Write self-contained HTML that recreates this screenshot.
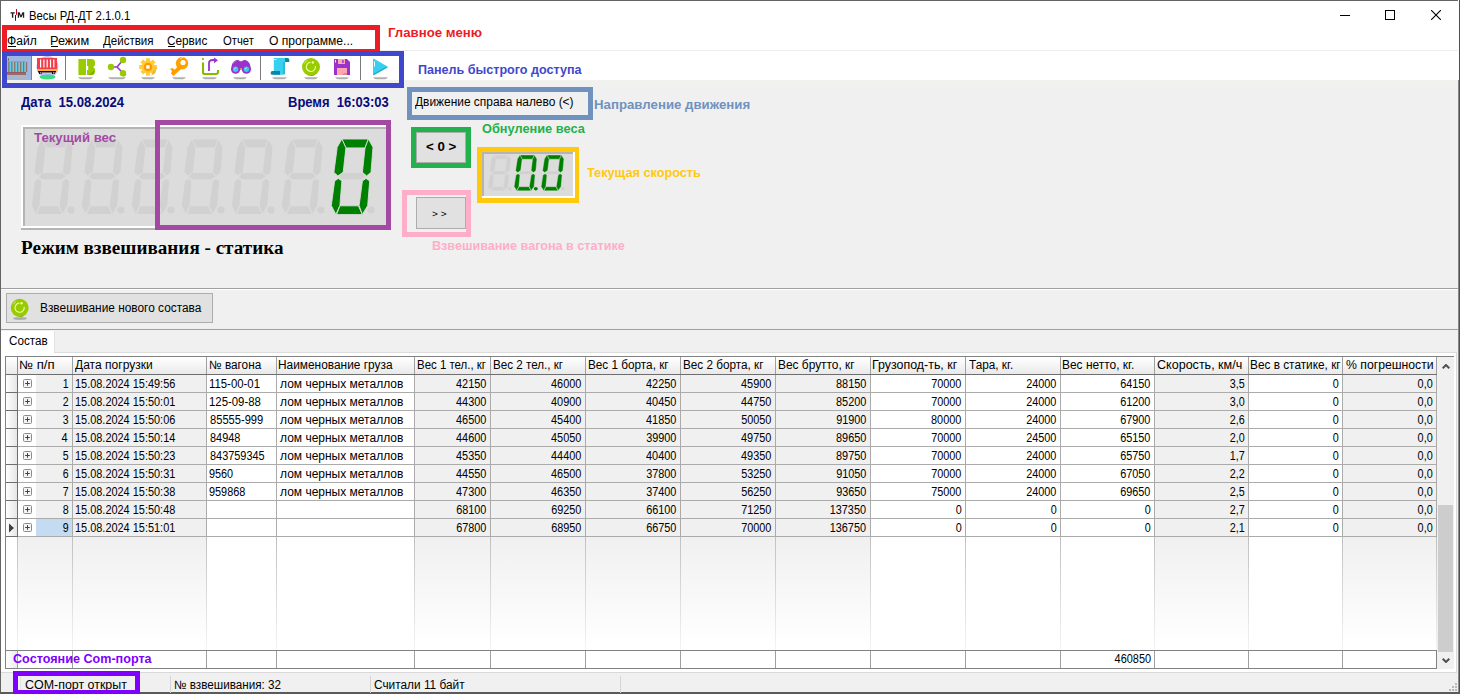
<!DOCTYPE html>
<html><head><meta charset="utf-8"><style>
html,body{margin:0;padding:0;}
body{width:1460px;height:694px;position:relative;overflow:hidden;background:#f0f0f0;font-family:"Liberation Sans",sans-serif;}
body>div,body>svg{position:absolute;}
.t{white-space:nowrap;}
</style></head><body>
<div style="left:0px;top:0px;width:1460px;height:81px;background:#fff;"></div>
<div style="left:0px;top:0px;width:1460px;height:1px;background:#646464;"></div>
<div style="left:0px;top:0px;width:1px;height:694px;background:#646464;"></div>
<div style="left:1459px;top:0px;width:1px;height:694px;background:#505050;"></div>
<div style="left:1458px;top:0px;width:1px;height:694px;background:#ffffff;"></div>
<svg style="left:9px;top:8px" width="17" height="14" viewBox="0 0 17 14"><path d="M1.5 4.2h4.2v1.3h-1.4v4.3h-1.4v-4.3h-1.4z" fill="#1e1e1e"/><rect x="7" y="1" width="1" height="5.8" fill="#c8001e"/><rect x="6" y="7" width="1" height="5.8" fill="#1e1e1e"/><path d="M8.8 4.2h1.8l1.4 3.2l1.4-3.2h1.8v5.6h-1.3v-3.6l-1.3 3h-1.2l-1.3-3v3.6h-1.3z" fill="#1e1e1e"/></svg>
<div class="t" style="left:29.26px;transform-origin:0 0;top:9.54px;font:normal 12px/12px 'Liberation Sans', sans-serif;color:#000;transform:scaleX(0.9415);">Весы РД-ДТ 2.1.0.1</div>
<div style="left:1340px;top:15px;width:10px;height:1px;background:#000;"></div>
<div style="left:1385px;top:10px;width:8px;height:8px;border:1px solid #000;background:transparent;"></div>
<svg style="left:1431px;top:10px" width="10" height="10" viewBox="0 0 10 10"><path d="M0 0L10 10M10 0L0 10" stroke="#000" stroke-width="1.1"/></svg>
<div style="left:1px;top:50px;width:1457px;height:1px;background:#ececec;"></div>
<div class="t" style="left:7.19px;transform-origin:0 0;top:34.84px;font:normal 12px/12px 'Liberation Sans', sans-serif;color:#000;transform:scaleX(1.0071);">Файл</div>
<div class="t" style="left:50.14px;transform-origin:0 0;top:34.84px;font:normal 12px/12px 'Liberation Sans', sans-serif;color:#000;transform:scaleX(1.0571);">Режим</div>
<div class="t" style="left:103.30px;transform-origin:0 0;top:34.84px;font:normal 12px/12px 'Liberation Sans', sans-serif;color:#000;transform:scaleX(0.9615);">Действия</div>
<div class="t" style="left:167.22px;transform-origin:0 0;top:34.84px;font:normal 12px/12px 'Liberation Sans', sans-serif;color:#000;transform:scaleX(0.9800);">Сервис</div>
<div class="t" style="left:222.50px;transform-origin:0 0;top:34.84px;font:normal 12px/12px 'Liberation Sans', sans-serif;color:#000;transform:scaleX(0.9394);">Отчет</div>
<div class="t" style="left:268.50px;transform-origin:0 0;top:34.84px;font:normal 12px/12px 'Liberation Sans', sans-serif;color:#000;transform:scaleX(1.0085);">О программе...</div>
<div style="left:1px;top:80px;width:1457px;height:1px;background:#f2f2ec;"></div>
<div style="left:1px;top:81px;width:1457px;height:207px;background:#f0f0f0;"></div>
<div style="left:1px;top:288px;width:1457px;height:1px;background:#a0a0a0;"></div>
<div style="left:1px;top:289px;width:1457px;height:1px;background:#ffffff;"></div>
<div style="left:1px;top:290px;width:1457px;height:39px;background:#f0f0f0;"></div>
<div style="left:1px;top:329px;width:1457px;height:1px;background:#a0a0a0;"></div>
<div style="left:1px;top:330px;width:1457px;height:343px;background:#f0f0f0;"></div>
<div style="left:1458px;top:80px;width:1px;height:614px;background:#8a8a8a;"></div>
<div class="t" style="left:20.80px;transform-origin:0 0;top:95.15px;font:bold 14px/14px 'Liberation Sans', sans-serif;color:#0b0b7c;transform:scaleX(0.9345);">Дата&nbsp;&nbsp;15.08.2024</div>
<div class="t" style="left:288.27px;transform-origin:0 0;top:95.15px;font:bold 14px/14px 'Liberation Sans', sans-serif;color:#0b0b7c;transform:scaleX(0.9280);">Время&nbsp;&nbsp;16:03:03</div>
<div style="left:21px;top:125px;width:369px;height:105px;background:#b4b4b4;"></div>
<div style="left:21px;top:125px;width:367px;height:103px;background:#ffffff;"></div>
<div style="left:23px;top:127px;width:365px;height:101px;background:#ffffff;"></div>
<div style="left:23px;top:127px;width:363px;height:99px;background:#b4b4b4;"></div>
<div style="left:25px;top:129px;width:361px;height:97px;background:#dcdcdc;"></div>
<svg style="left:31px;top:139px" width="48.0" height="78.0" viewBox="0 0 48 78" preserveAspectRatio="none"><polygon points="10.9,0 37.4,0 34,8.9 14.9,8.9" fill="#d1d1d1" stroke="#dcdcdc" stroke-width="0.9"/><polygon points="10.9,0 14.9,8.9 12.2,33.4 6.9,36.9 2.9,33.4 6.2,8.2" fill="#d1d1d1" stroke="#dcdcdc" stroke-width="0.9"/><polygon points="37.4,0 42,8.2 40,33.4 35.6,36.9 31.4,33.4 34,8.9" fill="#d1d1d1" stroke="#dcdcdc" stroke-width="0.9"/><polygon points="7.6,37.2 11.6,33.6 31.2,33.6 35.2,37.2 30.8,40.8 10.8,40.8" fill="#d1d1d1" stroke="#dcdcdc" stroke-width="0.9"/><polygon points="7.4,39.4 10.9,42 8.9,66.6 4.9,75.4 0.3,66.6 3.6,42" fill="#d1d1d1" stroke="#dcdcdc" stroke-width="0.9"/><polygon points="8.9,66.8 27.4,66.8 31.4,75.6 5.6,75.6" fill="#d1d1d1" stroke="#dcdcdc" stroke-width="0.9"/><polygon points="35,39.4 38.7,42 36.7,66.6 31.4,75.4 28.1,66.6 31.4,42" fill="#d1d1d1" stroke="#dcdcdc" stroke-width="0.9"/><circle cx="40" cy="71" r="3.6" fill="#d1d1d1"/></svg>
<svg style="left:81px;top:139px" width="48.0" height="78.0" viewBox="0 0 48 78" preserveAspectRatio="none"><polygon points="10.9,0 37.4,0 34,8.9 14.9,8.9" fill="#d1d1d1" stroke="#dcdcdc" stroke-width="0.9"/><polygon points="10.9,0 14.9,8.9 12.2,33.4 6.9,36.9 2.9,33.4 6.2,8.2" fill="#d1d1d1" stroke="#dcdcdc" stroke-width="0.9"/><polygon points="37.4,0 42,8.2 40,33.4 35.6,36.9 31.4,33.4 34,8.9" fill="#d1d1d1" stroke="#dcdcdc" stroke-width="0.9"/><polygon points="7.6,37.2 11.6,33.6 31.2,33.6 35.2,37.2 30.8,40.8 10.8,40.8" fill="#d1d1d1" stroke="#dcdcdc" stroke-width="0.9"/><polygon points="7.4,39.4 10.9,42 8.9,66.6 4.9,75.4 0.3,66.6 3.6,42" fill="#d1d1d1" stroke="#dcdcdc" stroke-width="0.9"/><polygon points="8.9,66.8 27.4,66.8 31.4,75.6 5.6,75.6" fill="#d1d1d1" stroke="#dcdcdc" stroke-width="0.9"/><polygon points="35,39.4 38.7,42 36.7,66.6 31.4,75.4 28.1,66.6 31.4,42" fill="#d1d1d1" stroke="#dcdcdc" stroke-width="0.9"/><circle cx="40" cy="71" r="3.6" fill="#d1d1d1"/></svg>
<svg style="left:131px;top:139px" width="48.0" height="78.0" viewBox="0 0 48 78" preserveAspectRatio="none"><polygon points="10.9,0 37.4,0 34,8.9 14.9,8.9" fill="#d1d1d1" stroke="#dcdcdc" stroke-width="0.9"/><polygon points="10.9,0 14.9,8.9 12.2,33.4 6.9,36.9 2.9,33.4 6.2,8.2" fill="#d1d1d1" stroke="#dcdcdc" stroke-width="0.9"/><polygon points="37.4,0 42,8.2 40,33.4 35.6,36.9 31.4,33.4 34,8.9" fill="#d1d1d1" stroke="#dcdcdc" stroke-width="0.9"/><polygon points="7.6,37.2 11.6,33.6 31.2,33.6 35.2,37.2 30.8,40.8 10.8,40.8" fill="#d1d1d1" stroke="#dcdcdc" stroke-width="0.9"/><polygon points="7.4,39.4 10.9,42 8.9,66.6 4.9,75.4 0.3,66.6 3.6,42" fill="#d1d1d1" stroke="#dcdcdc" stroke-width="0.9"/><polygon points="8.9,66.8 27.4,66.8 31.4,75.6 5.6,75.6" fill="#d1d1d1" stroke="#dcdcdc" stroke-width="0.9"/><polygon points="35,39.4 38.7,42 36.7,66.6 31.4,75.4 28.1,66.6 31.4,42" fill="#d1d1d1" stroke="#dcdcdc" stroke-width="0.9"/><circle cx="40" cy="71" r="3.6" fill="#d1d1d1"/></svg>
<svg style="left:181px;top:139px" width="48.0" height="78.0" viewBox="0 0 48 78" preserveAspectRatio="none"><polygon points="10.9,0 37.4,0 34,8.9 14.9,8.9" fill="#d1d1d1" stroke="#dcdcdc" stroke-width="0.9"/><polygon points="10.9,0 14.9,8.9 12.2,33.4 6.9,36.9 2.9,33.4 6.2,8.2" fill="#d1d1d1" stroke="#dcdcdc" stroke-width="0.9"/><polygon points="37.4,0 42,8.2 40,33.4 35.6,36.9 31.4,33.4 34,8.9" fill="#d1d1d1" stroke="#dcdcdc" stroke-width="0.9"/><polygon points="7.6,37.2 11.6,33.6 31.2,33.6 35.2,37.2 30.8,40.8 10.8,40.8" fill="#d1d1d1" stroke="#dcdcdc" stroke-width="0.9"/><polygon points="7.4,39.4 10.9,42 8.9,66.6 4.9,75.4 0.3,66.6 3.6,42" fill="#d1d1d1" stroke="#dcdcdc" stroke-width="0.9"/><polygon points="8.9,66.8 27.4,66.8 31.4,75.6 5.6,75.6" fill="#d1d1d1" stroke="#dcdcdc" stroke-width="0.9"/><polygon points="35,39.4 38.7,42 36.7,66.6 31.4,75.4 28.1,66.6 31.4,42" fill="#d1d1d1" stroke="#dcdcdc" stroke-width="0.9"/><circle cx="40" cy="71" r="3.6" fill="#d1d1d1"/></svg>
<svg style="left:231px;top:139px" width="48.0" height="78.0" viewBox="0 0 48 78" preserveAspectRatio="none"><polygon points="10.9,0 37.4,0 34,8.9 14.9,8.9" fill="#d1d1d1" stroke="#dcdcdc" stroke-width="0.9"/><polygon points="10.9,0 14.9,8.9 12.2,33.4 6.9,36.9 2.9,33.4 6.2,8.2" fill="#d1d1d1" stroke="#dcdcdc" stroke-width="0.9"/><polygon points="37.4,0 42,8.2 40,33.4 35.6,36.9 31.4,33.4 34,8.9" fill="#d1d1d1" stroke="#dcdcdc" stroke-width="0.9"/><polygon points="7.6,37.2 11.6,33.6 31.2,33.6 35.2,37.2 30.8,40.8 10.8,40.8" fill="#d1d1d1" stroke="#dcdcdc" stroke-width="0.9"/><polygon points="7.4,39.4 10.9,42 8.9,66.6 4.9,75.4 0.3,66.6 3.6,42" fill="#d1d1d1" stroke="#dcdcdc" stroke-width="0.9"/><polygon points="8.9,66.8 27.4,66.8 31.4,75.6 5.6,75.6" fill="#d1d1d1" stroke="#dcdcdc" stroke-width="0.9"/><polygon points="35,39.4 38.7,42 36.7,66.6 31.4,75.4 28.1,66.6 31.4,42" fill="#d1d1d1" stroke="#dcdcdc" stroke-width="0.9"/><circle cx="40" cy="71" r="3.6" fill="#d1d1d1"/></svg>
<svg style="left:281px;top:139px" width="48.0" height="78.0" viewBox="0 0 48 78" preserveAspectRatio="none"><polygon points="10.9,0 37.4,0 34,8.9 14.9,8.9" fill="#d1d1d1" stroke="#dcdcdc" stroke-width="0.9"/><polygon points="10.9,0 14.9,8.9 12.2,33.4 6.9,36.9 2.9,33.4 6.2,8.2" fill="#d1d1d1" stroke="#dcdcdc" stroke-width="0.9"/><polygon points="37.4,0 42,8.2 40,33.4 35.6,36.9 31.4,33.4 34,8.9" fill="#d1d1d1" stroke="#dcdcdc" stroke-width="0.9"/><polygon points="7.6,37.2 11.6,33.6 31.2,33.6 35.2,37.2 30.8,40.8 10.8,40.8" fill="#d1d1d1" stroke="#dcdcdc" stroke-width="0.9"/><polygon points="7.4,39.4 10.9,42 8.9,66.6 4.9,75.4 0.3,66.6 3.6,42" fill="#d1d1d1" stroke="#dcdcdc" stroke-width="0.9"/><polygon points="8.9,66.8 27.4,66.8 31.4,75.6 5.6,75.6" fill="#d1d1d1" stroke="#dcdcdc" stroke-width="0.9"/><polygon points="35,39.4 38.7,42 36.7,66.6 31.4,75.4 28.1,66.6 31.4,42" fill="#d1d1d1" stroke="#dcdcdc" stroke-width="0.9"/><circle cx="40" cy="71" r="3.6" fill="#d1d1d1"/></svg>
<svg style="left:331px;top:139px" width="48.0" height="78.0" viewBox="0 0 48 78" preserveAspectRatio="none"><polygon points="10.9,0 37.4,0 34,8.9 14.9,8.9" fill="#008000" stroke="#dcdcdc" stroke-width="0.9"/><polygon points="10.9,0 14.9,8.9 12.2,33.4 6.9,36.9 2.9,33.4 6.2,8.2" fill="#008000" stroke="#dcdcdc" stroke-width="0.9"/><polygon points="37.4,0 42,8.2 40,33.4 35.6,36.9 31.4,33.4 34,8.9" fill="#008000" stroke="#dcdcdc" stroke-width="0.9"/><polygon points="7.6,37.2 11.6,33.6 31.2,33.6 35.2,37.2 30.8,40.8 10.8,40.8" fill="#d1d1d1" stroke="#dcdcdc" stroke-width="0.9"/><polygon points="7.4,39.4 10.9,42 8.9,66.6 4.9,75.4 0.3,66.6 3.6,42" fill="#008000" stroke="#dcdcdc" stroke-width="0.9"/><polygon points="8.9,66.8 27.4,66.8 31.4,75.6 5.6,75.6" fill="#008000" stroke="#dcdcdc" stroke-width="0.9"/><polygon points="35,39.4 38.7,42 36.7,66.6 31.4,75.4 28.1,66.6 31.4,42" fill="#008000" stroke="#dcdcdc" stroke-width="0.9"/><circle cx="40" cy="71" r="3.6" fill="#d1d1d1"/></svg>
<div style="left:155px;top:120px;width:226px;height:100px;border:5px solid #a349a4;background:transparent;"></div>
<div class="t" style="left:34.00px;transform-origin:0 0;top:131.64px;font:bold 12px/12px 'Liberation Sans', sans-serif;color:#a349a4;transform:scaleX(1.0986);">Текущий вес</div>
<div class="t" style="left:20.90px;transform-origin:0 0;top:238.73px;font:bold 18px/18px 'Liberation Serif', serif;color:#000;transform:scaleX(1.0615);">Режим взвешивания - статика</div>
<div style="left:407px;top:87px;width:176px;height:23px;border:5px solid #7092be;background:#f0f0f0;"></div>
<div class="t" style="left:415.00px;transform-origin:0 0;top:96.14px;font:normal 12px/12px 'Liberation Sans', sans-serif;color:#000;transform:scaleX(0.9937);">Движение справа налево (&lt;)</div>
<div class="t" style="left:593.60px;transform-origin:0 0;top:99.14px;font:bold 12px/12px 'Liberation Sans', sans-serif;color:#7092be;transform:scaleX(1.1029);">Направление движения</div>
<div style="left:411px;top:127px;width:50px;height:31px;border:5px solid #22b14c;background:transparent;"></div>
<div style="left:416px;top:132px;width:48px;height:29px;border:1px solid #adadad;background:#e1e1e1;"></div>
<div class="t" style="left:425.60px;transform-origin:0 0;top:140.00px;font:bold 13px/13px 'Liberation Sans', sans-serif;color:#000;transform:scaleX(1.0241);">&lt; 0 &gt;</div>
<div class="t" style="left:481.50px;transform-origin:0 0;top:122.94px;font:bold 12px/12px 'Liberation Sans', sans-serif;color:#22b14c;transform:scaleX(1.0649);">Обнуление веса</div>
<div style="left:477px;top:147px;width:92px;height:46px;border:5px solid #ffc90e;background:transparent;"></div>
<div style="left:482px;top:152px;width:93px;height:46px;background:#ffffff;"></div>
<div style="left:482px;top:152px;width:91px;height:44px;background:#b4b4b4;"></div>
<div style="left:484px;top:154px;width:89px;height:42px;background:#dcdcdc;"></div>
<svg style="left:487.5px;top:155px" width="26.2" height="37.0" viewBox="0 0 48 78" preserveAspectRatio="none"><polygon points="10.9,0 37.4,0 34,8.9 14.9,8.9" fill="#d1d1d1" stroke="#dcdcdc" stroke-width="0.8"/><polygon points="10.9,0 14.9,8.9 12.2,33.4 6.9,36.9 2.9,33.4 6.2,8.2" fill="#d1d1d1" stroke="#dcdcdc" stroke-width="0.8"/><polygon points="37.4,0 42,8.2 40,33.4 35.6,36.9 31.4,33.4 34,8.9" fill="#d1d1d1" stroke="#dcdcdc" stroke-width="0.8"/><polygon points="7.6,37.2 11.6,33.6 31.2,33.6 35.2,37.2 30.8,40.8 10.8,40.8" fill="#d1d1d1" stroke="#dcdcdc" stroke-width="0.8"/><polygon points="7.4,39.4 10.9,42 8.9,66.6 4.9,75.4 0.3,66.6 3.6,42" fill="#d1d1d1" stroke="#dcdcdc" stroke-width="0.8"/><polygon points="8.9,66.8 27.4,66.8 31.4,75.6 5.6,75.6" fill="#d1d1d1" stroke="#dcdcdc" stroke-width="0.8"/><polygon points="35,39.4 38.7,42 36.7,66.6 31.4,75.4 28.1,66.6 31.4,42" fill="#d1d1d1" stroke="#dcdcdc" stroke-width="0.8"/><circle cx="40" cy="71" r="3.6" fill="#d1d1d1"/></svg>
<svg style="left:514px;top:155px" width="26.2" height="37.0" viewBox="0 0 48 78" preserveAspectRatio="none"><polygon points="10.9,0 37.4,0 34,8.9 14.9,8.9" fill="#008000" stroke="#dcdcdc" stroke-width="0.8"/><polygon points="10.9,0 14.9,8.9 12.2,33.4 6.9,36.9 2.9,33.4 6.2,8.2" fill="#008000" stroke="#dcdcdc" stroke-width="0.8"/><polygon points="37.4,0 42,8.2 40,33.4 35.6,36.9 31.4,33.4 34,8.9" fill="#008000" stroke="#dcdcdc" stroke-width="0.8"/><polygon points="7.6,37.2 11.6,33.6 31.2,33.6 35.2,37.2 30.8,40.8 10.8,40.8" fill="#d1d1d1" stroke="#dcdcdc" stroke-width="0.8"/><polygon points="7.4,39.4 10.9,42 8.9,66.6 4.9,75.4 0.3,66.6 3.6,42" fill="#008000" stroke="#dcdcdc" stroke-width="0.8"/><polygon points="8.9,66.8 27.4,66.8 31.4,75.6 5.6,75.6" fill="#008000" stroke="#dcdcdc" stroke-width="0.8"/><polygon points="35,39.4 38.7,42 36.7,66.6 31.4,75.4 28.1,66.6 31.4,42" fill="#008000" stroke="#dcdcdc" stroke-width="0.8"/><circle cx="40" cy="71" r="3.6" fill="#008000"/></svg>
<svg style="left:541px;top:155px" width="26.2" height="37.0" viewBox="0 0 48 78" preserveAspectRatio="none"><polygon points="10.9,0 37.4,0 34,8.9 14.9,8.9" fill="#008000" stroke="#dcdcdc" stroke-width="0.8"/><polygon points="10.9,0 14.9,8.9 12.2,33.4 6.9,36.9 2.9,33.4 6.2,8.2" fill="#008000" stroke="#dcdcdc" stroke-width="0.8"/><polygon points="37.4,0 42,8.2 40,33.4 35.6,36.9 31.4,33.4 34,8.9" fill="#008000" stroke="#dcdcdc" stroke-width="0.8"/><polygon points="7.6,37.2 11.6,33.6 31.2,33.6 35.2,37.2 30.8,40.8 10.8,40.8" fill="#d1d1d1" stroke="#dcdcdc" stroke-width="0.8"/><polygon points="7.4,39.4 10.9,42 8.9,66.6 4.9,75.4 0.3,66.6 3.6,42" fill="#008000" stroke="#dcdcdc" stroke-width="0.8"/><polygon points="8.9,66.8 27.4,66.8 31.4,75.6 5.6,75.6" fill="#008000" stroke="#dcdcdc" stroke-width="0.8"/><polygon points="35,39.4 38.7,42 36.7,66.6 31.4,75.4 28.1,66.6 31.4,42" fill="#008000" stroke="#dcdcdc" stroke-width="0.8"/><circle cx="40" cy="71" r="3.6" fill="#d1d1d1"/></svg>
<div class="t" style="left:587.20px;transform-origin:0 0;top:166.84px;font:bold 12px/12px 'Liberation Sans', sans-serif;color:#ffc90e;transform:scaleX(1.0579);">Текущая скорость</div>
<div style="left:402px;top:190px;width:59px;height:37px;border:5px solid #ffaec9;background:transparent;"></div>
<div style="left:416px;top:197px;width:48px;height:30px;border:1px solid #adadad;background:#e1e1e1;"></div>
<div class="t" style="left:431.68px;transform-origin:0 0;top:209.88px;font:normal 9px/9px 'Liberation Sans', sans-serif;color:#000;transform:scaleX(1.1250);">&gt; &gt;</div>
<div class="t" style="left:431.95px;transform-origin:0 0;top:240.14px;font:bold 12px/12px 'Liberation Sans', sans-serif;color:#ffaec9;transform:scaleX(1.0495);">Взвешивание вагона в статике</div>
<div style="left:6px;top:293px;width:205px;height:28px;border:1px solid #adadad;background:#e1e1e1;"></div>
<svg style="left:10px;top:298px" width="20" height="22" viewBox="0 0 20 22"><ellipse cx="10" cy="20.5" rx="7" ry="1.3" fill="#a8a8a8"/><circle cx="9.7" cy="9.8" r="9" fill="#99cc00"/><path d="M15 16 a9 9 0 0 1 -9 2.5 L12 19z" fill="#7aab00"/><path d="M14.1 8.8 A4.6 4.6 0 1 1 9.2 5.1" stroke="#f0ffa8" stroke-width="1.1" fill="none"/><circle cx="11.5" cy="5.3" r="1.2" fill="#f0ffa8"/><path d="M3.2 6.3 L6 3.2" stroke="#e8f8a0" stroke-width="0.7"/></svg>
<div class="t" style="left:40.31px;transform-origin:0 0;top:301.64px;font:normal 12px/12px 'Liberation Sans', sans-serif;color:#000;transform:scaleX(0.9895);">Взвешивание нового состава</div>
<div style="left:7px;top:56px;width:25px;height:24px;background:#9fb6e1;"></div>
<div style="left:31px;top:56px;width:1px;height:24px;background:#5a86d4;"></div>
<svg style="left:7px;top:57px" width="22" height="22" viewBox="0 0 22 22"><rect x="0" y="4" width="18.5" height="11" fill="#6ccbe8"/><rect x="0" y="4" width="18.5" height="1" fill="#58b8d8"/><rect x="1.20" y="5" width="1.3" height="10" fill="#8c7464"/><rect x="4.15" y="5" width="1.3" height="10" fill="#8c7464"/><rect x="7.10" y="5" width="1.3" height="10" fill="#8c7464"/><rect x="10.05" y="5" width="1.3" height="10" fill="#8c7464"/><rect x="13.00" y="5" width="1.3" height="10" fill="#8c7464"/><rect x="15.95" y="5" width="1.3" height="10" fill="#8c7464"/><rect x="18.90" y="5" width="1.3" height="10" fill="#8c7464"/><rect x="0" y="15" width="19" height="0.8" fill="#7a4a48"/><rect x="0" y="15.8" width="19" height="1.6" fill="#dc4c50"/><rect x="0" y="17.4" width="19" height="0.6" fill="#7a5a58"/><rect x="0.2" y="18" width="2.6" height="2.2" fill="#cdb28a"/><rect x="4" y="18" width="2.6" height="2.2" fill="#cdb28a"/><rect x="11" y="18" width="2.6" height="2.2" fill="#cdb28a"/><rect x="15" y="18" width="2.6" height="2.2" fill="#cdb28a"/><rect x="1" y="1.5" width="1" height="2" fill="#6b6b1b"/></svg>
<svg style="left:35px;top:55px" width="26" height="26" viewBox="0 0 26 26"><circle cx="12.5" cy="12" r="11" fill="#c6b9fb"/><ellipse cx="12.5" cy="22" rx="8" ry="2.6" fill="#3ddc84"/><rect x="2" y="3" width="20" height="11" fill="#f43d4b"/><rect x="5.0" y="4.5" width="1.2" height="8" fill="#ffffff"/><rect x="8.3" y="4.5" width="1.2" height="8" fill="#ffffff"/><rect x="11.6" y="4.5" width="1.2" height="8" fill="#ffffff"/><rect x="14.899999999999999" y="4.5" width="1.2" height="8" fill="#ffffff"/><rect x="18.2" y="4.5" width="1.2" height="8" fill="#ffffff"/><rect x="2" y="14" width="20" height="2" fill="#ffb52e"/><rect x="3" y="16" width="18" height="1.4" fill="#111"/><rect x="4" y="17" width="3" height="2" fill="#111"/><rect x="17" y="17" width="3" height="2" fill="#111"/><rect x="5" y="17.4" width="1.5" height="1" fill="#eee"/><rect x="18" y="17.4" width="1.5" height="1" fill="#eee"/></svg>
<div style="left:65px;top:56px;width:1px;height:24px;background:#7a7a7a;"></div>
<svg style="left:78px;top:59px" width="18" height="17" viewBox="0 0 18 17"><rect x="0" y="0" width="8" height="16" fill="#99cc00"/><rect x="0" y="0" width="1" height="16" fill="#c3e36a"/><path d="M9 0h4.5a3.5 3.5 0 0 1 3.5 3.5v1.5a3 3 0 0 1-2 3a3 3 0 0 1 2 3v1.5a3.5 3.5 0 0 1-3.5 3.5h-4.5v-5h1.2v-4h-1.2z" fill="#99cc00"/><path d="M16.2 11.5a3.5 3.5 0 0 1-3 4.5h-2.5z" fill="#7aab00"/></svg>
<svg style="left:78px;top:77px" width="15" height="3" viewBox="0 0 15 3"><path d="M0 0.2 H15 Q13.5 2.2 12 2.2 H3 Q1.5 2.2 0 0.2z" fill="#b0b0b0"/></svg>
<svg style="left:107px;top:55px" width="20" height="22" viewBox="0 0 20 22"><path d="M4 12L10 12L16 5M10 12L16 18" stroke="#9933cc" stroke-width="1.6" fill="none"/><circle cx="16" cy="5" r="3.2" fill="#99cc00"/><circle cx="4" cy="12" r="3.2" fill="#99cc00"/><circle cx="16" cy="18.2" r="3.2" fill="#99cc00"/><path d="M19 17.5a3.2 3.2 0 0 1-3 3.9l2.5-2z" fill="#7aab00"/></svg>
<svg style="left:108px;top:77px" width="18" height="3" viewBox="0 0 18 3"><path d="M0 0.2 H18 Q16.5 2.2 15 2.2 H3 Q1.5 2.2 0 0.2z" fill="#b0b0b0"/></svg>
<svg style="left:138px;top:57px" width="20" height="20" viewBox="0 0 20 20"><path d="M16.30,8.03L18.79,8.07L18.79,11.93L16.30,11.97L15.84,13.07L17.58,14.85L14.85,17.58L13.07,15.84L11.97,16.30L11.93,18.79L8.07,18.79L8.03,16.30L6.93,15.84L5.15,17.58L2.42,14.85L4.16,13.07L3.70,11.97L1.21,11.93L1.21,8.07L3.70,8.03L4.16,6.93L2.42,5.15L5.15,2.42L6.93,4.16L8.03,3.70L8.07,1.21L11.93,1.21L11.97,3.70L13.07,4.16L14.85,2.42L17.58,5.15L15.84,6.93Z" fill="#ffcc33"/><path d="M16.5 12 L19 10.5 L17 16.5 L13 18.5z" fill="#e0b020" opacity="0.8"/><circle cx="10" cy="10" r="4.3" fill="#ff9900"/><rect x="8.2" y="8.2" width="3.4" height="3.4" fill="#fff"/></svg>
<svg style="left:141px;top:77px" width="14" height="3" viewBox="0 0 14 3"><path d="M0 0.2 H14 Q12.5 2.2 11 2.2 H3 Q1.5 2.2 0 0.2z" fill="#b0b0b0"/></svg>
<svg style="left:168px;top:55px" width="22" height="22" viewBox="0 0 22 22"><circle cx="14" cy="8.3" r="6.2" fill="#ffa200"/><circle cx="15" cy="7.5" r="2.6" fill="#fff"/><path d="M10 11.5 L13 14 L5.5 21 L3 18.5 L4 16 L2 14 L4.5 13 L6.5 14.8z" fill="#ff9c00"/><path d="M12.5 4 a5 5 0 0 1 3-2" stroke="#fff" stroke-width="0.8" fill="none"/></svg>
<svg style="left:172px;top:77px" width="14" height="3" viewBox="0 0 14 3"><path d="M0 0.2 H14 Q12.5 2.2 11 2.2 H3 Q1.5 2.2 0 0.2z" fill="#b0b0b0"/></svg>
<svg style="left:200px;top:57px" width="20" height="20" viewBox="0 0 20 20"><rect x="2" y="1" width="2" height="2" fill="#99cc22"/><path d="M3 5.5 V15.5 Q3 17 5 17 H16 Q18 17 18 15 V13" stroke="#88bb00" stroke-width="2.1" fill="none"/><path d="M9 14 V6 Q9 3 13 3 H14" stroke="#9933cc" stroke-width="1.8" fill="none"/><path d="M14 0.5 L18 3.2 L14 6.3z" fill="#9933cc"/></svg>
<svg style="left:202px;top:77px" width="15" height="3" viewBox="0 0 15 3"><path d="M0 0.2 H15 Q13.5 2.2 12 2.2 H3 Q1.5 2.2 0 0.2z" fill="#b0b0b0"/></svg>
<svg style="left:230px;top:59px" width="24" height="16" viewBox="0 0 24 16"><path d="M1.6 9.5 Q1.2 3 6 1.2 Q8.5 0.3 10 2.2 H12 Q13.5 0.3 16 1.2 Q20.8 3 20.4 9.5z" fill="#9933cc"/><circle cx="5.6" cy="10.2" r="4.6" fill="#9933cc"/><circle cx="16.4" cy="10.2" r="4.6" fill="#9933cc"/><rect x="9" y="6" width="4" height="5" fill="#9933cc"/><circle cx="5.6" cy="10.2" r="2.7" fill="#3cc8ec"/><circle cx="16.4" cy="10.2" r="2.7" fill="#3cc8ec"/><rect x="10.2" y="9.2" width="1.8" height="1.8" fill="#ffa500"/><path d="M4.3 10 l1.2 -1 M15.2 10 l1.4 -0.9" stroke="#fff" stroke-width="0.8"/><path d="M3 5 Q4 2.5 6 2" stroke="#c080e0" stroke-width="0.6" fill="none"/></svg>
<svg style="left:233px;top:77px" width="14" height="3" viewBox="0 0 14 3"><path d="M0 0.2 H14 Q12.5 2.2 11 2.2 H3 Q1.5 2.2 0 0.2z" fill="#b0b0b0"/></svg>
<div style="left:260px;top:56px;width:1px;height:24px;background:#7a7a7a;"></div>
<svg style="left:270px;top:57px" width="20" height="19" viewBox="0 0 20 19"><path d="M3.8 1 H15 V16.5 Q15 17.8 13.5 17.8 H3.8z" fill="#38d0ee"/><rect x="13" y="5" width="2" height="12" fill="#2cb8d6"/><path d="M15 1 h2.5 a1.8 1.8 0 0 1 1.8 1.8 v2.2 h-4.3z" fill="#0a86a6"/><path d="M2.5 14 h7.5 v3.8 h-7.5 a1.9 1.9 0 0 1 0 -3.8z" fill="#0a86a6"/><rect x="4" y="2" width="2.5" height="0.8" fill="#e6faff"/></svg>
<svg style="left:272px;top:77px" width="15" height="3" viewBox="0 0 15 3"><path d="M0 0.2 H15 Q13.5 2.2 12 2.2 H3 Q1.5 2.2 0 0.2z" fill="#b0b0b0"/></svg>
<svg style="left:301px;top:57px" width="20" height="20" viewBox="0 0 20 20"><circle cx="10" cy="10" r="9" fill="#99cc00"/><path d="M15 16 a9 9 0 0 1 -9 2.5 L12 19z" fill="#7aab00"/><path d="M14.4 9 A4.6 4.6 0 1 1 9.5 5.3" stroke="#f0ffa8" stroke-width="1.1" fill="none"/><circle cx="11.8" cy="5.5" r="1.2" fill="#f0ffa8"/><path d="M3.5 6.5 L6.3 3.4" stroke="#e8f8a0" stroke-width="0.7"/></svg>
<svg style="left:304px;top:77px" width="14" height="3" viewBox="0 0 14 3"><path d="M0 0.2 H14 Q12.5 2.2 11 2.2 H3 Q1.5 2.2 0 0.2z" fill="#b0b0b0"/></svg>
<svg style="left:334px;top:58px" width="17" height="18" viewBox="0 0 17 18"><path d="M0 1 H13 L16 4 V17 H0z" fill="#9933cc"/><rect x="4" y="1" width="7" height="5" fill="#ffaaaa"/><rect x="8.2" y="2" width="1.4" height="3" fill="#9933cc"/><rect x="3" y="10" width="10" height="7" fill="#ffa6ae"/><rect x="1" y="2" width="0.9" height="2.5" fill="#fff"/><path d="M8 17 L10 15 H13 V17z" fill="#dd8890"/></svg>
<svg style="left:335px;top:77px" width="14" height="3" viewBox="0 0 14 3"><path d="M0 0.2 H14 Q12.5 2.2 11 2.2 H3 Q1.5 2.2 0 0.2z" fill="#b0b0b0"/></svg>
<div style="left:360px;top:56px;width:1px;height:24px;background:#7a7a7a;"></div>
<svg style="left:372px;top:58px" width="18" height="18" viewBox="0 0 18 18"><path d="M1 1 Q1 0.5 2 0.8 L15.5 8.5 Q16.2 9 15.5 9.5 L2 17 Q1 17.5 1 16.5z" fill="#38d0ee"/><path d="M15.5 9.5 L2 17 L1 16 L13.5 9z" fill="#22b0cc"/><rect x="2" y="3.5" width="1" height="5" fill="#e8fbff"/></svg>
<svg style="left:373px;top:77px" width="15" height="3" viewBox="0 0 15 3"><path d="M0 0.2 H15 Q13.5 2.2 12 2.2 H3 Q1.5 2.2 0 0.2z" fill="#b0b0b0"/></svg>
<div style="left:2px;top:25px;width:368px;height:19px;border:5px solid #ed1c24;background:transparent;"></div>
<div style="left:2px;top:51px;width:392px;height:27px;border:5px solid #3f48cc;background:transparent;"></div>
<div style="left:8px;top:46px;width:8px;height:1px;background:#000;"></div>
<div style="left:51px;top:46px;width:7px;height:1px;background:#000;"></div>
<div style="left:168px;top:46px;width:7px;height:1px;background:#000;"></div>
<div class="t" style="left:388.20px;transform-origin:0 0;top:26.74px;font:bold 12px/12px 'Liberation Sans', sans-serif;color:#ed1c24;transform:scaleX(1.1000);">Главное меню</div>
<div class="t" style="left:417.85px;transform-origin:0 0;top:64.04px;font:bold 12px/12px 'Liberation Sans', sans-serif;color:#3f48cc;transform:scaleX(1.0471);">Панель быстрого доступа</div>
<div style="left:1px;top:330px;width:1457px;height:343px;background:#f0f0f0;"></div>
<div style="left:54px;top:331px;width:1402px;height:21px;background:#f0f0f0;"></div>
<div style="left:54px;top:331px;width:1px;height:21px;background:#e3e3e3;"></div>
<div style="left:1px;top:331px;width:53px;height:22px;background:#ffffff;"></div>
<div class="t" style="left:8.83px;transform-origin:0 0;top:334.84px;font:normal 12px/12px 'Liberation Sans', sans-serif;color:#000;transform:scaleX(0.9711);">Состав</div>
<div style="left:1px;top:352px;width:1456px;height:320px;background:#ffffff;"></div>
<div style="left:1456px;top:352px;width:1px;height:320px;background:#dadada;"></div>
<div style="left:54px;top:352px;width:1403px;height:1px;background:#dcdcdc;"></div>
<div style="left:1px;top:672px;width:1456px;height:1px;background:#dadada;"></div>
<div style="left:5px;top:356px;width:1449px;height:313px;background:#ffffff;"></div>
<div style="left:5px;top:356px;width:1449px;height:1px;background:#828282;"></div>
<div style="left:5px;top:356px;width:1px;height:313px;background:#828282;"></div>
<div style="left:6px;top:357px;width:1430px;height:17px;background:linear-gradient(#ffffff,#f7f7f7 40%,#e9e9e9);"></div>
<div style="left:6px;top:374px;width:1431px;height:1px;background:#6e6e6e;"></div>
<div style="left:17px;top:357px;width:1px;height:18px;background:#8a8a8a;"></div>
<div style="left:72px;top:357px;width:1px;height:17px;background:#a0a0a0;"></div>
<div class="t" style="left:19.41px;transform-origin:0 0;top:358.64px;font:normal 12px/12px 'Liberation Sans', sans-serif;color:#000;transform:scaleX(1.0935);">№ п/п</div>
<div style="left:206px;top:357px;width:1px;height:17px;background:#a0a0a0;"></div>
<div class="t" style="left:74.90px;transform-origin:0 0;top:358.64px;font:normal 12px/12px 'Liberation Sans', sans-serif;color:#000;transform:scaleX(1.0039);">Дата погрузки</div>
<div style="left:276px;top:357px;width:1px;height:17px;background:#a0a0a0;"></div>
<div class="t" style="left:209.02px;transform-origin:0 0;top:358.64px;font:normal 12px/12px 'Liberation Sans', sans-serif;color:#000;transform:scaleX(0.9808);">№ вагона</div>
<div style="left:414px;top:357px;width:1px;height:17px;background:#a0a0a0;"></div>
<div class="t" style="left:278.41px;transform-origin:0 0;top:358.64px;font:normal 12px/12px 'Liberation Sans', sans-serif;color:#000;transform:scaleX(0.9904);">Наименование груза</div>
<div style="left:490px;top:357px;width:1px;height:17px;background:#a0a0a0;"></div>
<div class="t" style="left:416.55px;transform-origin:0 0;top:358.64px;font:normal 12px/12px 'Liberation Sans', sans-serif;color:#000;transform:scaleX(0.9549);">Вес 1 тел., кг</div>
<div style="left:585px;top:357px;width:1px;height:17px;background:#a0a0a0;"></div>
<div class="t" style="left:492.53px;transform-origin:0 0;top:358.64px;font:normal 12px/12px 'Liberation Sans', sans-serif;color:#000;transform:scaleX(0.9690);">Вес 2 тел., кг</div>
<div style="left:680px;top:357px;width:1px;height:17px;background:#a0a0a0;"></div>
<div class="t" style="left:587.62px;transform-origin:0 0;top:358.64px;font:normal 12px/12px 'Liberation Sans', sans-serif;color:#000;transform:scaleX(0.9790);">Вес 1 борта, кг</div>
<div style="left:775px;top:357px;width:1px;height:17px;background:#a0a0a0;"></div>
<div class="t" style="left:682.62px;transform-origin:0 0;top:358.64px;font:normal 12px/12px 'Liberation Sans', sans-serif;color:#000;transform:scaleX(0.9778);">Вес 2 борта, кг</div>
<div style="left:870px;top:357px;width:1px;height:17px;background:#a0a0a0;"></div>
<div class="t" style="left:777.51px;transform-origin:0 0;top:358.64px;font:normal 12px/12px 'Liberation Sans', sans-serif;color:#000;transform:scaleX(0.9921);">Вес брутто, кг</div>
<div style="left:965px;top:357px;width:1px;height:17px;background:#a0a0a0;"></div>
<div class="t" style="left:872.37px;transform-origin:0 0;top:358.64px;font:normal 12px/12px 'Liberation Sans', sans-serif;color:#000;transform:scaleX(1.0346);">Грузопод-ть, кг</div>
<div style="left:1060px;top:357px;width:1px;height:17px;background:#a0a0a0;"></div>
<div class="t" style="left:968.80px;transform-origin:0 0;top:358.64px;font:normal 12px/12px 'Liberation Sans', sans-serif;color:#000;transform:scaleX(0.9818);">Тара, кг.</div>
<div style="left:1154px;top:357px;width:1px;height:17px;background:#a0a0a0;"></div>
<div class="t" style="left:1062.30px;transform-origin:0 0;top:358.64px;font:normal 12px/12px 'Liberation Sans', sans-serif;color:#000;transform:scaleX(0.9958);">Вес нетто, кг.</div>
<div style="left:1248px;top:357px;width:1px;height:17px;background:#a0a0a0;"></div>
<div class="t" style="left:1156.95px;transform-origin:0 0;top:358.64px;font:normal 12px/12px 'Liberation Sans', sans-serif;color:#000;transform:scaleX(1.0450);">Скорость, км/ч</div>
<div style="left:1342px;top:357px;width:1px;height:17px;background:#a0a0a0;"></div>
<div class="t" style="left:1250.22px;transform-origin:0 0;top:358.64px;font:normal 12px/12px 'Liberation Sans', sans-serif;color:#000;transform:scaleX(0.9846);">Вес в статике, кг</div>
<div style="left:1436px;top:357px;width:1px;height:17px;background:#a0a0a0;"></div>
<div class="t" style="left:1345.80px;transform-origin:0 0;top:358.64px;font:normal 12px/12px 'Liberation Sans', sans-serif;color:#000;transform:scaleX(1.0188);">% погрешности</div>
<div style="left:36px;top:375px;width:36px;height:162px;background:#f0f0f0;"></div>
<div style="left:18px;top:537px;width:54px;height:113px;background:linear-gradient(#f0f0f0,#ffffff 96%);"></div>
<div style="left:73px;top:375px;width:133px;height:162px;background:#f0f0f0;"></div>
<div style="left:73px;top:537px;width:133px;height:113px;background:linear-gradient(#f0f0f0,#ffffff 96%);"></div>
<div style="left:415px;top:375px;width:75px;height:162px;background:#f0f0f0;"></div>
<div style="left:415px;top:537px;width:75px;height:113px;background:linear-gradient(#f0f0f0,#ffffff 96%);"></div>
<div style="left:491px;top:375px;width:94px;height:162px;background:#f0f0f0;"></div>
<div style="left:491px;top:537px;width:94px;height:113px;background:linear-gradient(#f0f0f0,#ffffff 96%);"></div>
<div style="left:586px;top:375px;width:94px;height:162px;background:#f0f0f0;"></div>
<div style="left:586px;top:537px;width:94px;height:113px;background:linear-gradient(#f0f0f0,#ffffff 96%);"></div>
<div style="left:681px;top:375px;width:94px;height:162px;background:#f0f0f0;"></div>
<div style="left:681px;top:537px;width:94px;height:113px;background:linear-gradient(#f0f0f0,#ffffff 96%);"></div>
<div style="left:776px;top:375px;width:94px;height:162px;background:#f0f0f0;"></div>
<div style="left:776px;top:537px;width:94px;height:113px;background:linear-gradient(#f0f0f0,#ffffff 96%);"></div>
<div style="left:1155px;top:375px;width:93px;height:162px;background:#f0f0f0;"></div>
<div style="left:1155px;top:537px;width:93px;height:113px;background:linear-gradient(#f0f0f0,#ffffff 96%);"></div>
<div style="left:1343px;top:375px;width:93px;height:162px;background:#f0f0f0;"></div>
<div style="left:1343px;top:537px;width:93px;height:113px;background:linear-gradient(#f0f0f0,#ffffff 96%);"></div>
<div style="left:36px;top:519px;width:36px;height:17px;background:#c4dcf2;"></div>
<div style="left:6px;top:375px;width:11px;height:17px;background:linear-gradient(90deg,#ffffff,#e6e6e6);"></div>
<div style="left:6px;top:392px;width:11px;height:1px;background:#6e6e6e;"></div>
<div style="left:6px;top:393px;width:11px;height:17px;background:linear-gradient(90deg,#ffffff,#e6e6e6);"></div>
<div style="left:6px;top:410px;width:11px;height:1px;background:#6e6e6e;"></div>
<div style="left:6px;top:411px;width:11px;height:17px;background:linear-gradient(90deg,#ffffff,#e6e6e6);"></div>
<div style="left:6px;top:428px;width:11px;height:1px;background:#6e6e6e;"></div>
<div style="left:6px;top:429px;width:11px;height:17px;background:linear-gradient(90deg,#ffffff,#e6e6e6);"></div>
<div style="left:6px;top:446px;width:11px;height:1px;background:#6e6e6e;"></div>
<div style="left:6px;top:447px;width:11px;height:17px;background:linear-gradient(90deg,#ffffff,#e6e6e6);"></div>
<div style="left:6px;top:464px;width:11px;height:1px;background:#6e6e6e;"></div>
<div style="left:6px;top:465px;width:11px;height:17px;background:linear-gradient(90deg,#ffffff,#e6e6e6);"></div>
<div style="left:6px;top:482px;width:11px;height:1px;background:#6e6e6e;"></div>
<div style="left:6px;top:483px;width:11px;height:17px;background:linear-gradient(90deg,#ffffff,#e6e6e6);"></div>
<div style="left:6px;top:500px;width:11px;height:1px;background:#6e6e6e;"></div>
<div style="left:6px;top:501px;width:11px;height:17px;background:linear-gradient(90deg,#ffffff,#e6e6e6);"></div>
<div style="left:6px;top:518px;width:11px;height:1px;background:#6e6e6e;"></div>
<div style="left:6px;top:519px;width:11px;height:17px;background:linear-gradient(90deg,#ffffff,#e6e6e6);"></div>
<div style="left:6px;top:536px;width:11px;height:1px;background:#6e6e6e;"></div>
<div style="left:17px;top:375px;width:1px;height:162px;background:#6e6e6e;"></div>
<div style="left:18px;top:392px;width:1418px;height:1px;background:#ababab;"></div>
<div style="left:18px;top:410px;width:1418px;height:1px;background:#ababab;"></div>
<div style="left:18px;top:428px;width:1418px;height:1px;background:#ababab;"></div>
<div style="left:18px;top:446px;width:1418px;height:1px;background:#ababab;"></div>
<div style="left:18px;top:464px;width:1418px;height:1px;background:#ababab;"></div>
<div style="left:18px;top:482px;width:1418px;height:1px;background:#ababab;"></div>
<div style="left:18px;top:500px;width:1418px;height:1px;background:#ababab;"></div>
<div style="left:18px;top:518px;width:1418px;height:1px;background:#ababab;"></div>
<div style="left:18px;top:536px;width:1418px;height:1px;background:#ababab;"></div>
<div style="left:72px;top:375px;width:1px;height:162px;background:#ababab;"></div>
<div style="left:72px;top:537px;width:1px;height:113px;background:linear-gradient(#c0c0c0,#f4f4f4);"></div>
<div style="left:206px;top:375px;width:1px;height:162px;background:#ababab;"></div>
<div style="left:206px;top:537px;width:1px;height:113px;background:linear-gradient(#c0c0c0,#f4f4f4);"></div>
<div style="left:276px;top:375px;width:1px;height:162px;background:#ababab;"></div>
<div style="left:276px;top:537px;width:1px;height:113px;background:linear-gradient(#c0c0c0,#f4f4f4);"></div>
<div style="left:414px;top:375px;width:1px;height:162px;background:#ababab;"></div>
<div style="left:414px;top:537px;width:1px;height:113px;background:linear-gradient(#c0c0c0,#f4f4f4);"></div>
<div style="left:490px;top:375px;width:1px;height:162px;background:#ababab;"></div>
<div style="left:490px;top:537px;width:1px;height:113px;background:linear-gradient(#c0c0c0,#f4f4f4);"></div>
<div style="left:585px;top:375px;width:1px;height:162px;background:#ababab;"></div>
<div style="left:585px;top:537px;width:1px;height:113px;background:linear-gradient(#c0c0c0,#f4f4f4);"></div>
<div style="left:680px;top:375px;width:1px;height:162px;background:#ababab;"></div>
<div style="left:680px;top:537px;width:1px;height:113px;background:linear-gradient(#c0c0c0,#f4f4f4);"></div>
<div style="left:775px;top:375px;width:1px;height:162px;background:#ababab;"></div>
<div style="left:775px;top:537px;width:1px;height:113px;background:linear-gradient(#c0c0c0,#f4f4f4);"></div>
<div style="left:870px;top:375px;width:1px;height:162px;background:#ababab;"></div>
<div style="left:870px;top:537px;width:1px;height:113px;background:linear-gradient(#c0c0c0,#f4f4f4);"></div>
<div style="left:965px;top:375px;width:1px;height:162px;background:#ababab;"></div>
<div style="left:965px;top:537px;width:1px;height:113px;background:linear-gradient(#c0c0c0,#f4f4f4);"></div>
<div style="left:1060px;top:375px;width:1px;height:162px;background:#ababab;"></div>
<div style="left:1060px;top:537px;width:1px;height:113px;background:linear-gradient(#c0c0c0,#f4f4f4);"></div>
<div style="left:1154px;top:375px;width:1px;height:162px;background:#ababab;"></div>
<div style="left:1154px;top:537px;width:1px;height:113px;background:linear-gradient(#c0c0c0,#f4f4f4);"></div>
<div style="left:1248px;top:375px;width:1px;height:162px;background:#ababab;"></div>
<div style="left:1248px;top:537px;width:1px;height:113px;background:linear-gradient(#c0c0c0,#f4f4f4);"></div>
<div style="left:1342px;top:375px;width:1px;height:162px;background:#ababab;"></div>
<div style="left:1342px;top:537px;width:1px;height:113px;background:linear-gradient(#c0c0c0,#f4f4f4);"></div>
<div style="left:1436px;top:375px;width:1px;height:162px;background:#ababab;"></div>
<div style="left:1436px;top:537px;width:1px;height:113px;background:linear-gradient(#c0c0c0,#f4f4f4);"></div>
<div style="left:17px;top:537px;width:1px;height:113px;background:linear-gradient(#c0c0c0,#f4f4f4);"></div>
<svg style="left:23px;top:379px" width="9" height="9" viewBox="0 0 9 9"><rect x="0.5" y="0.5" width="8" height="8" rx="1" fill="#f4f4f4" stroke="#8c8c8c"/><path d="M2.2 4.5H6.8M4.5 2.2V6.8" stroke="#2c3c8c" stroke-width="1"/></svg>
<div class="t" style="right:1391.69px;transform-origin:100% 0;top:377.54px;font:normal 12px/12px 'Liberation Sans', sans-serif;color:#000;transform:scaleX(0.8800);">1</div>
<div class="t" style="left:75.09px;transform-origin:0 0;top:377.54px;font:normal 12px/12px 'Liberation Sans', sans-serif;color:#000;transform:scaleX(0.9108);">15.08.2024 15:49:56</div>
<div class="t" style="left:209.05px;transform-origin:0 0;top:377.54px;font:normal 12px/12px 'Liberation Sans', sans-serif;color:#000;transform:scaleX(0.9472);">115-00-01</div>
<div class="t" style="left:280.00px;transform-origin:0 0;top:377.54px;font:normal 12px/12px 'Liberation Sans', sans-serif;color:#000;">лом черных металлов</div>
<div class="t" style="right:973.96px;transform-origin:100% 0;top:377.54px;font:normal 12px/12px 'Liberation Sans', sans-serif;color:#000;transform:scaleX(0.9091);">42150</div>
<div class="t" style="right:878.96px;transform-origin:100% 0;top:377.54px;font:normal 12px/12px 'Liberation Sans', sans-serif;color:#000;transform:scaleX(0.9091);">46000</div>
<div class="t" style="right:783.96px;transform-origin:100% 0;top:377.54px;font:normal 12px/12px 'Liberation Sans', sans-serif;color:#000;transform:scaleX(0.9091);">42250</div>
<div class="t" style="right:688.96px;transform-origin:100% 0;top:377.54px;font:normal 12px/12px 'Liberation Sans', sans-serif;color:#000;transform:scaleX(0.9091);">45900</div>
<div class="t" style="right:593.96px;transform-origin:100% 0;top:377.54px;font:normal 12px/12px 'Liberation Sans', sans-serif;color:#000;transform:scaleX(0.9091);">88150</div>
<div class="t" style="right:498.96px;transform-origin:100% 0;top:377.54px;font:normal 12px/12px 'Liberation Sans', sans-serif;color:#000;transform:scaleX(0.9062);">70000</div>
<div class="t" style="right:403.96px;transform-origin:100% 0;top:377.54px;font:normal 12px/12px 'Liberation Sans', sans-serif;color:#000;transform:scaleX(0.9062);">24000</div>
<div class="t" style="right:309.96px;transform-origin:100% 0;top:377.54px;font:normal 12px/12px 'Liberation Sans', sans-serif;color:#000;transform:scaleX(0.9062);">64150</div>
<div class="t" style="right:215.68px;transform-origin:100% 0;top:377.54px;font:normal 12px/12px 'Liberation Sans', sans-serif;color:#000;transform:scaleX(0.8980);">3,5</div>
<div class="t" style="right:121.68px;transform-origin:100% 0;top:377.54px;font:normal 12px/12px 'Liberation Sans', sans-serif;color:#000;transform:scaleX(0.9000);">0</div>
<div class="t" style="right:27.68px;transform-origin:100% 0;top:377.54px;font:normal 12px/12px 'Liberation Sans', sans-serif;color:#000;transform:scaleX(0.9044);">0,0</div>
<svg style="left:23px;top:397px" width="9" height="9" viewBox="0 0 9 9"><rect x="0.5" y="0.5" width="8" height="8" rx="1" fill="#f4f4f4" stroke="#8c8c8c"/><path d="M2.2 4.5H6.8M4.5 2.2V6.8" stroke="#2c3c8c" stroke-width="1"/></svg>
<div class="t" style="right:1391.69px;transform-origin:100% 0;top:395.54px;font:normal 12px/12px 'Liberation Sans', sans-serif;color:#000;transform:scaleX(0.8800);">2</div>
<div class="t" style="left:75.09px;transform-origin:0 0;top:395.54px;font:normal 12px/12px 'Liberation Sans', sans-serif;color:#000;transform:scaleX(0.9108);">15.08.2024 15:50:01</div>
<div class="t" style="left:209.05px;transform-origin:0 0;top:395.54px;font:normal 12px/12px 'Liberation Sans', sans-serif;color:#000;transform:scaleX(0.9472);">125-09-88</div>
<div class="t" style="left:280.00px;transform-origin:0 0;top:395.54px;font:normal 12px/12px 'Liberation Sans', sans-serif;color:#000;">лом черных металлов</div>
<div class="t" style="right:973.96px;transform-origin:100% 0;top:395.54px;font:normal 12px/12px 'Liberation Sans', sans-serif;color:#000;transform:scaleX(0.9091);">44300</div>
<div class="t" style="right:878.96px;transform-origin:100% 0;top:395.54px;font:normal 12px/12px 'Liberation Sans', sans-serif;color:#000;transform:scaleX(0.9091);">40900</div>
<div class="t" style="right:783.96px;transform-origin:100% 0;top:395.54px;font:normal 12px/12px 'Liberation Sans', sans-serif;color:#000;transform:scaleX(0.9091);">40450</div>
<div class="t" style="right:688.96px;transform-origin:100% 0;top:395.54px;font:normal 12px/12px 'Liberation Sans', sans-serif;color:#000;transform:scaleX(0.9091);">44750</div>
<div class="t" style="right:593.96px;transform-origin:100% 0;top:395.54px;font:normal 12px/12px 'Liberation Sans', sans-serif;color:#000;transform:scaleX(0.9091);">85200</div>
<div class="t" style="right:498.96px;transform-origin:100% 0;top:395.54px;font:normal 12px/12px 'Liberation Sans', sans-serif;color:#000;transform:scaleX(0.9062);">70000</div>
<div class="t" style="right:403.96px;transform-origin:100% 0;top:395.54px;font:normal 12px/12px 'Liberation Sans', sans-serif;color:#000;transform:scaleX(0.9062);">24000</div>
<div class="t" style="right:309.96px;transform-origin:100% 0;top:395.54px;font:normal 12px/12px 'Liberation Sans', sans-serif;color:#000;transform:scaleX(0.9062);">61200</div>
<div class="t" style="right:215.68px;transform-origin:100% 0;top:395.54px;font:normal 12px/12px 'Liberation Sans', sans-serif;color:#000;transform:scaleX(0.8980);">3,0</div>
<div class="t" style="right:121.68px;transform-origin:100% 0;top:395.54px;font:normal 12px/12px 'Liberation Sans', sans-serif;color:#000;transform:scaleX(0.9000);">0</div>
<div class="t" style="right:27.68px;transform-origin:100% 0;top:395.54px;font:normal 12px/12px 'Liberation Sans', sans-serif;color:#000;transform:scaleX(0.9044);">0,0</div>
<svg style="left:23px;top:415px" width="9" height="9" viewBox="0 0 9 9"><rect x="0.5" y="0.5" width="8" height="8" rx="1" fill="#f4f4f4" stroke="#8c8c8c"/><path d="M2.2 4.5H6.8M4.5 2.2V6.8" stroke="#2c3c8c" stroke-width="1"/></svg>
<div class="t" style="right:1391.69px;transform-origin:100% 0;top:413.54px;font:normal 12px/12px 'Liberation Sans', sans-serif;color:#000;transform:scaleX(0.8800);">3</div>
<div class="t" style="left:75.09px;transform-origin:0 0;top:413.54px;font:normal 12px/12px 'Liberation Sans', sans-serif;color:#000;transform:scaleX(0.9108);">15.08.2024 15:50:06</div>
<div class="t" style="left:210.00px;transform-origin:0 0;top:413.54px;font:normal 12px/12px 'Liberation Sans', sans-serif;color:#000;transform:scaleX(0.9281);">85555-999</div>
<div class="t" style="left:280.00px;transform-origin:0 0;top:413.54px;font:normal 12px/12px 'Liberation Sans', sans-serif;color:#000;">лом черных металлов</div>
<div class="t" style="right:973.96px;transform-origin:100% 0;top:413.54px;font:normal 12px/12px 'Liberation Sans', sans-serif;color:#000;transform:scaleX(0.9091);">46500</div>
<div class="t" style="right:878.96px;transform-origin:100% 0;top:413.54px;font:normal 12px/12px 'Liberation Sans', sans-serif;color:#000;transform:scaleX(0.9091);">45400</div>
<div class="t" style="right:783.96px;transform-origin:100% 0;top:413.54px;font:normal 12px/12px 'Liberation Sans', sans-serif;color:#000;transform:scaleX(0.9091);">41850</div>
<div class="t" style="right:688.96px;transform-origin:100% 0;top:413.54px;font:normal 12px/12px 'Liberation Sans', sans-serif;color:#000;transform:scaleX(0.9062);">50050</div>
<div class="t" style="right:593.96px;transform-origin:100% 0;top:413.54px;font:normal 12px/12px 'Liberation Sans', sans-serif;color:#000;transform:scaleX(0.9062);">91900</div>
<div class="t" style="right:498.96px;transform-origin:100% 0;top:413.54px;font:normal 12px/12px 'Liberation Sans', sans-serif;color:#000;transform:scaleX(0.9091);">80000</div>
<div class="t" style="right:403.96px;transform-origin:100% 0;top:413.54px;font:normal 12px/12px 'Liberation Sans', sans-serif;color:#000;transform:scaleX(0.9062);">24000</div>
<div class="t" style="right:309.96px;transform-origin:100% 0;top:413.54px;font:normal 12px/12px 'Liberation Sans', sans-serif;color:#000;transform:scaleX(0.9062);">67900</div>
<div class="t" style="right:215.68px;transform-origin:100% 0;top:413.54px;font:normal 12px/12px 'Liberation Sans', sans-serif;color:#000;transform:scaleX(0.8980);">2,6</div>
<div class="t" style="right:121.68px;transform-origin:100% 0;top:413.54px;font:normal 12px/12px 'Liberation Sans', sans-serif;color:#000;transform:scaleX(0.9000);">0</div>
<div class="t" style="right:27.68px;transform-origin:100% 0;top:413.54px;font:normal 12px/12px 'Liberation Sans', sans-serif;color:#000;transform:scaleX(0.9044);">0,0</div>
<svg style="left:23px;top:433px" width="9" height="9" viewBox="0 0 9 9"><rect x="0.5" y="0.5" width="8" height="8" rx="1" fill="#f4f4f4" stroke="#8c8c8c"/><path d="M2.2 4.5H6.8M4.5 2.2V6.8" stroke="#2c3c8c" stroke-width="1"/></svg>
<div class="t" style="right:1392.59px;transform-origin:100% 0;top:431.54px;font:normal 12px/12px 'Liberation Sans', sans-serif;color:#000;transform:scaleX(0.9143);">4</div>
<div class="t" style="left:75.09px;transform-origin:0 0;top:431.54px;font:normal 12px/12px 'Liberation Sans', sans-serif;color:#000;transform:scaleX(0.9108);">15.08.2024 15:50:14</div>
<div class="t" style="left:210.00px;transform-origin:0 0;top:431.54px;font:normal 12px/12px 'Liberation Sans', sans-serif;color:#000;transform:scaleX(0.9091);">84948</div>
<div class="t" style="left:280.00px;transform-origin:0 0;top:431.54px;font:normal 12px/12px 'Liberation Sans', sans-serif;color:#000;">лом черных металлов</div>
<div class="t" style="right:973.96px;transform-origin:100% 0;top:431.54px;font:normal 12px/12px 'Liberation Sans', sans-serif;color:#000;transform:scaleX(0.9091);">44600</div>
<div class="t" style="right:878.96px;transform-origin:100% 0;top:431.54px;font:normal 12px/12px 'Liberation Sans', sans-serif;color:#000;transform:scaleX(0.9091);">45050</div>
<div class="t" style="right:783.96px;transform-origin:100% 0;top:431.54px;font:normal 12px/12px 'Liberation Sans', sans-serif;color:#000;transform:scaleX(0.9062);">39900</div>
<div class="t" style="right:688.96px;transform-origin:100% 0;top:431.54px;font:normal 12px/12px 'Liberation Sans', sans-serif;color:#000;transform:scaleX(0.9091);">49750</div>
<div class="t" style="right:593.96px;transform-origin:100% 0;top:431.54px;font:normal 12px/12px 'Liberation Sans', sans-serif;color:#000;transform:scaleX(0.9091);">89650</div>
<div class="t" style="right:498.96px;transform-origin:100% 0;top:431.54px;font:normal 12px/12px 'Liberation Sans', sans-serif;color:#000;transform:scaleX(0.9062);">70000</div>
<div class="t" style="right:403.96px;transform-origin:100% 0;top:431.54px;font:normal 12px/12px 'Liberation Sans', sans-serif;color:#000;transform:scaleX(0.9062);">24500</div>
<div class="t" style="right:309.96px;transform-origin:100% 0;top:431.54px;font:normal 12px/12px 'Liberation Sans', sans-serif;color:#000;transform:scaleX(0.9062);">65150</div>
<div class="t" style="right:215.68px;transform-origin:100% 0;top:431.54px;font:normal 12px/12px 'Liberation Sans', sans-serif;color:#000;transform:scaleX(0.8980);">2,0</div>
<div class="t" style="right:121.68px;transform-origin:100% 0;top:431.54px;font:normal 12px/12px 'Liberation Sans', sans-serif;color:#000;transform:scaleX(0.9000);">0</div>
<div class="t" style="right:27.68px;transform-origin:100% 0;top:431.54px;font:normal 12px/12px 'Liberation Sans', sans-serif;color:#000;transform:scaleX(0.9044);">0,0</div>
<svg style="left:23px;top:451px" width="9" height="9" viewBox="0 0 9 9"><rect x="0.5" y="0.5" width="8" height="8" rx="1" fill="#f4f4f4" stroke="#8c8c8c"/><path d="M2.2 4.5H6.8M4.5 2.2V6.8" stroke="#2c3c8c" stroke-width="1"/></svg>
<div class="t" style="right:1391.69px;transform-origin:100% 0;top:449.54px;font:normal 12px/12px 'Liberation Sans', sans-serif;color:#000;transform:scaleX(0.8800);">5</div>
<div class="t" style="left:75.09px;transform-origin:0 0;top:449.54px;font:normal 12px/12px 'Liberation Sans', sans-serif;color:#000;transform:scaleX(0.9108);">15.08.2024 15:50:23</div>
<div class="t" style="left:210.00px;transform-origin:0 0;top:449.54px;font:normal 12px/12px 'Liberation Sans', sans-serif;color:#000;transform:scaleX(0.9100);">843759345</div>
<div class="t" style="left:280.00px;transform-origin:0 0;top:449.54px;font:normal 12px/12px 'Liberation Sans', sans-serif;color:#000;">лом черных металлов</div>
<div class="t" style="right:973.96px;transform-origin:100% 0;top:449.54px;font:normal 12px/12px 'Liberation Sans', sans-serif;color:#000;transform:scaleX(0.9091);">45350</div>
<div class="t" style="right:878.96px;transform-origin:100% 0;top:449.54px;font:normal 12px/12px 'Liberation Sans', sans-serif;color:#000;transform:scaleX(0.9091);">44400</div>
<div class="t" style="right:783.96px;transform-origin:100% 0;top:449.54px;font:normal 12px/12px 'Liberation Sans', sans-serif;color:#000;transform:scaleX(0.9091);">40400</div>
<div class="t" style="right:688.96px;transform-origin:100% 0;top:449.54px;font:normal 12px/12px 'Liberation Sans', sans-serif;color:#000;transform:scaleX(0.9091);">49350</div>
<div class="t" style="right:593.96px;transform-origin:100% 0;top:449.54px;font:normal 12px/12px 'Liberation Sans', sans-serif;color:#000;transform:scaleX(0.9091);">89750</div>
<div class="t" style="right:498.96px;transform-origin:100% 0;top:449.54px;font:normal 12px/12px 'Liberation Sans', sans-serif;color:#000;transform:scaleX(0.9062);">70000</div>
<div class="t" style="right:403.96px;transform-origin:100% 0;top:449.54px;font:normal 12px/12px 'Liberation Sans', sans-serif;color:#000;transform:scaleX(0.9062);">24000</div>
<div class="t" style="right:309.96px;transform-origin:100% 0;top:449.54px;font:normal 12px/12px 'Liberation Sans', sans-serif;color:#000;transform:scaleX(0.9062);">65750</div>
<div class="t" style="right:215.68px;transform-origin:100% 0;top:449.54px;font:normal 12px/12px 'Liberation Sans', sans-serif;color:#000;transform:scaleX(0.8980);">1,7</div>
<div class="t" style="right:121.68px;transform-origin:100% 0;top:449.54px;font:normal 12px/12px 'Liberation Sans', sans-serif;color:#000;transform:scaleX(0.9000);">0</div>
<div class="t" style="right:27.68px;transform-origin:100% 0;top:449.54px;font:normal 12px/12px 'Liberation Sans', sans-serif;color:#000;transform:scaleX(0.9044);">0,0</div>
<svg style="left:23px;top:469px" width="9" height="9" viewBox="0 0 9 9"><rect x="0.5" y="0.5" width="8" height="8" rx="1" fill="#f4f4f4" stroke="#8c8c8c"/><path d="M2.2 4.5H6.8M4.5 2.2V6.8" stroke="#2c3c8c" stroke-width="1"/></svg>
<div class="t" style="right:1391.69px;transform-origin:100% 0;top:467.54px;font:normal 12px/12px 'Liberation Sans', sans-serif;color:#000;transform:scaleX(0.8800);">6</div>
<div class="t" style="left:75.09px;transform-origin:0 0;top:467.54px;font:normal 12px/12px 'Liberation Sans', sans-serif;color:#000;transform:scaleX(0.9108);">15.08.2024 15:50:31</div>
<div class="t" style="left:209.10px;transform-origin:0 0;top:467.54px;font:normal 12px/12px 'Liberation Sans', sans-serif;color:#000;transform:scaleX(0.9040);">9560</div>
<div class="t" style="left:280.00px;transform-origin:0 0;top:467.54px;font:normal 12px/12px 'Liberation Sans', sans-serif;color:#000;">лом черных металлов</div>
<div class="t" style="right:973.96px;transform-origin:100% 0;top:467.54px;font:normal 12px/12px 'Liberation Sans', sans-serif;color:#000;transform:scaleX(0.9091);">44550</div>
<div class="t" style="right:878.96px;transform-origin:100% 0;top:467.54px;font:normal 12px/12px 'Liberation Sans', sans-serif;color:#000;transform:scaleX(0.9091);">46500</div>
<div class="t" style="right:783.96px;transform-origin:100% 0;top:467.54px;font:normal 12px/12px 'Liberation Sans', sans-serif;color:#000;transform:scaleX(0.9062);">37800</div>
<div class="t" style="right:688.96px;transform-origin:100% 0;top:467.54px;font:normal 12px/12px 'Liberation Sans', sans-serif;color:#000;transform:scaleX(0.9062);">53250</div>
<div class="t" style="right:593.96px;transform-origin:100% 0;top:467.54px;font:normal 12px/12px 'Liberation Sans', sans-serif;color:#000;transform:scaleX(0.9062);">91050</div>
<div class="t" style="right:498.96px;transform-origin:100% 0;top:467.54px;font:normal 12px/12px 'Liberation Sans', sans-serif;color:#000;transform:scaleX(0.9062);">70000</div>
<div class="t" style="right:403.96px;transform-origin:100% 0;top:467.54px;font:normal 12px/12px 'Liberation Sans', sans-serif;color:#000;transform:scaleX(0.9062);">24000</div>
<div class="t" style="right:309.96px;transform-origin:100% 0;top:467.54px;font:normal 12px/12px 'Liberation Sans', sans-serif;color:#000;transform:scaleX(0.9062);">67050</div>
<div class="t" style="right:215.68px;transform-origin:100% 0;top:467.54px;font:normal 12px/12px 'Liberation Sans', sans-serif;color:#000;transform:scaleX(0.8980);">2,2</div>
<div class="t" style="right:121.68px;transform-origin:100% 0;top:467.54px;font:normal 12px/12px 'Liberation Sans', sans-serif;color:#000;transform:scaleX(0.9000);">0</div>
<div class="t" style="right:27.68px;transform-origin:100% 0;top:467.54px;font:normal 12px/12px 'Liberation Sans', sans-serif;color:#000;transform:scaleX(0.9044);">0,0</div>
<svg style="left:23px;top:487px" width="9" height="9" viewBox="0 0 9 9"><rect x="0.5" y="0.5" width="8" height="8" rx="1" fill="#f4f4f4" stroke="#8c8c8c"/><path d="M2.2 4.5H6.8M4.5 2.2V6.8" stroke="#2c3c8c" stroke-width="1"/></svg>
<div class="t" style="right:1391.69px;transform-origin:100% 0;top:485.54px;font:normal 12px/12px 'Liberation Sans', sans-serif;color:#000;transform:scaleX(0.8800);">7</div>
<div class="t" style="left:75.09px;transform-origin:0 0;top:485.54px;font:normal 12px/12px 'Liberation Sans', sans-serif;color:#000;transform:scaleX(0.9108);">15.08.2024 15:50:38</div>
<div class="t" style="left:209.09px;transform-origin:0 0;top:485.54px;font:normal 12px/12px 'Liberation Sans', sans-serif;color:#000;transform:scaleX(0.9077);">959868</div>
<div class="t" style="left:280.00px;transform-origin:0 0;top:485.54px;font:normal 12px/12px 'Liberation Sans', sans-serif;color:#000;">лом черных металлов</div>
<div class="t" style="right:973.96px;transform-origin:100% 0;top:485.54px;font:normal 12px/12px 'Liberation Sans', sans-serif;color:#000;transform:scaleX(0.9091);">47300</div>
<div class="t" style="right:878.96px;transform-origin:100% 0;top:485.54px;font:normal 12px/12px 'Liberation Sans', sans-serif;color:#000;transform:scaleX(0.9091);">46350</div>
<div class="t" style="right:783.96px;transform-origin:100% 0;top:485.54px;font:normal 12px/12px 'Liberation Sans', sans-serif;color:#000;transform:scaleX(0.9062);">37400</div>
<div class="t" style="right:688.96px;transform-origin:100% 0;top:485.54px;font:normal 12px/12px 'Liberation Sans', sans-serif;color:#000;transform:scaleX(0.9062);">56250</div>
<div class="t" style="right:593.96px;transform-origin:100% 0;top:485.54px;font:normal 12px/12px 'Liberation Sans', sans-serif;color:#000;transform:scaleX(0.9062);">93650</div>
<div class="t" style="right:498.96px;transform-origin:100% 0;top:485.54px;font:normal 12px/12px 'Liberation Sans', sans-serif;color:#000;transform:scaleX(0.9062);">75000</div>
<div class="t" style="right:403.96px;transform-origin:100% 0;top:485.54px;font:normal 12px/12px 'Liberation Sans', sans-serif;color:#000;transform:scaleX(0.9062);">24000</div>
<div class="t" style="right:309.96px;transform-origin:100% 0;top:485.54px;font:normal 12px/12px 'Liberation Sans', sans-serif;color:#000;transform:scaleX(0.9062);">69650</div>
<div class="t" style="right:215.68px;transform-origin:100% 0;top:485.54px;font:normal 12px/12px 'Liberation Sans', sans-serif;color:#000;transform:scaleX(0.8980);">2,5</div>
<div class="t" style="right:121.68px;transform-origin:100% 0;top:485.54px;font:normal 12px/12px 'Liberation Sans', sans-serif;color:#000;transform:scaleX(0.9000);">0</div>
<div class="t" style="right:27.68px;transform-origin:100% 0;top:485.54px;font:normal 12px/12px 'Liberation Sans', sans-serif;color:#000;transform:scaleX(0.9044);">0,0</div>
<svg style="left:23px;top:505px" width="9" height="9" viewBox="0 0 9 9"><rect x="0.5" y="0.5" width="8" height="8" rx="1" fill="#f4f4f4" stroke="#8c8c8c"/><path d="M2.2 4.5H6.8M4.5 2.2V6.8" stroke="#2c3c8c" stroke-width="1"/></svg>
<div class="t" style="right:1391.68px;transform-origin:100% 0;top:503.54px;font:normal 12px/12px 'Liberation Sans', sans-serif;color:#000;transform:scaleX(0.9000);">8</div>
<div class="t" style="left:75.09px;transform-origin:0 0;top:503.54px;font:normal 12px/12px 'Liberation Sans', sans-serif;color:#000;transform:scaleX(0.9108);">15.08.2024 15:50:48</div>
<div class="t" style="right:973.96px;transform-origin:100% 0;top:503.54px;font:normal 12px/12px 'Liberation Sans', sans-serif;color:#000;transform:scaleX(0.9062);">68100</div>
<div class="t" style="right:878.96px;transform-origin:100% 0;top:503.54px;font:normal 12px/12px 'Liberation Sans', sans-serif;color:#000;transform:scaleX(0.9062);">69250</div>
<div class="t" style="right:783.96px;transform-origin:100% 0;top:503.54px;font:normal 12px/12px 'Liberation Sans', sans-serif;color:#000;transform:scaleX(0.9062);">66100</div>
<div class="t" style="right:688.96px;transform-origin:100% 0;top:503.54px;font:normal 12px/12px 'Liberation Sans', sans-serif;color:#000;transform:scaleX(0.9062);">71250</div>
<div class="t" style="right:594.26px;transform-origin:100% 0;top:503.54px;font:normal 12px/12px 'Liberation Sans', sans-serif;color:#000;transform:scaleX(0.9077);">137350</div>
<div class="t" style="right:498.68px;transform-origin:100% 0;top:503.54px;font:normal 12px/12px 'Liberation Sans', sans-serif;color:#000;transform:scaleX(0.9000);">0</div>
<div class="t" style="right:403.68px;transform-origin:100% 0;top:503.54px;font:normal 12px/12px 'Liberation Sans', sans-serif;color:#000;transform:scaleX(0.9000);">0</div>
<div class="t" style="right:309.68px;transform-origin:100% 0;top:503.54px;font:normal 12px/12px 'Liberation Sans', sans-serif;color:#000;transform:scaleX(0.9000);">0</div>
<div class="t" style="right:215.68px;transform-origin:100% 0;top:503.54px;font:normal 12px/12px 'Liberation Sans', sans-serif;color:#000;transform:scaleX(0.8980);">2,7</div>
<div class="t" style="right:121.68px;transform-origin:100% 0;top:503.54px;font:normal 12px/12px 'Liberation Sans', sans-serif;color:#000;transform:scaleX(0.9000);">0</div>
<div class="t" style="right:27.68px;transform-origin:100% 0;top:503.54px;font:normal 12px/12px 'Liberation Sans', sans-serif;color:#000;transform:scaleX(0.9044);">0,0</div>
<svg style="left:23px;top:523px" width="9" height="9" viewBox="0 0 9 9"><rect x="0.5" y="0.5" width="8" height="8" rx="1" fill="#f4f4f4" stroke="#8c8c8c"/><path d="M2.2 4.5H6.8M4.5 2.2V6.8" stroke="#2c3c8c" stroke-width="1"/></svg>
<div class="t" style="right:1391.69px;transform-origin:100% 0;top:521.54px;font:normal 12px/12px 'Liberation Sans', sans-serif;color:#000;transform:scaleX(0.8800);">9</div>
<div class="t" style="left:75.09px;transform-origin:0 0;top:521.54px;font:normal 12px/12px 'Liberation Sans', sans-serif;color:#000;transform:scaleX(0.9108);">15.08.2024 15:51:01</div>
<div class="t" style="right:973.96px;transform-origin:100% 0;top:521.54px;font:normal 12px/12px 'Liberation Sans', sans-serif;color:#000;transform:scaleX(0.9062);">67800</div>
<div class="t" style="right:878.96px;transform-origin:100% 0;top:521.54px;font:normal 12px/12px 'Liberation Sans', sans-serif;color:#000;transform:scaleX(0.9062);">68950</div>
<div class="t" style="right:783.96px;transform-origin:100% 0;top:521.54px;font:normal 12px/12px 'Liberation Sans', sans-serif;color:#000;transform:scaleX(0.9062);">66750</div>
<div class="t" style="right:688.96px;transform-origin:100% 0;top:521.54px;font:normal 12px/12px 'Liberation Sans', sans-serif;color:#000;transform:scaleX(0.9062);">70000</div>
<div class="t" style="right:594.26px;transform-origin:100% 0;top:521.54px;font:normal 12px/12px 'Liberation Sans', sans-serif;color:#000;transform:scaleX(0.9077);">136750</div>
<div class="t" style="right:498.68px;transform-origin:100% 0;top:521.54px;font:normal 12px/12px 'Liberation Sans', sans-serif;color:#000;transform:scaleX(0.9000);">0</div>
<div class="t" style="right:403.68px;transform-origin:100% 0;top:521.54px;font:normal 12px/12px 'Liberation Sans', sans-serif;color:#000;transform:scaleX(0.9000);">0</div>
<div class="t" style="right:309.68px;transform-origin:100% 0;top:521.54px;font:normal 12px/12px 'Liberation Sans', sans-serif;color:#000;transform:scaleX(0.9000);">0</div>
<div class="t" style="right:215.68px;transform-origin:100% 0;top:521.54px;font:normal 12px/12px 'Liberation Sans', sans-serif;color:#000;transform:scaleX(0.8980);">2,1</div>
<div class="t" style="right:121.68px;transform-origin:100% 0;top:521.54px;font:normal 12px/12px 'Liberation Sans', sans-serif;color:#000;transform:scaleX(0.9000);">0</div>
<div class="t" style="right:27.68px;transform-origin:100% 0;top:521.54px;font:normal 12px/12px 'Liberation Sans', sans-serif;color:#000;transform:scaleX(0.9044);">0,0</div>
<svg style="left:9px;top:523px" width="6" height="10" viewBox="0 0 6 10"><path d="M0 0.5L5 5L0 9.5z" fill="#404040"/></svg>
<div style="left:6px;top:650px;width:1431px;height:1px;background:#828282;"></div>
<div style="left:6px;top:668px;width:1431px;height:1px;background:#828282;"></div>
<div style="left:1436px;top:650px;width:1px;height:19px;background:#828282;"></div>
<div style="left:6px;top:651px;width:11px;height:17px;background:linear-gradient(90deg,#ffffff,#ececec);"></div>
<div style="left:17px;top:651px;width:1px;height:17px;background:#a0a0a0;"></div>
<div style="left:72px;top:651px;width:1px;height:17px;background:#a0a0a0;"></div>
<div style="left:206px;top:651px;width:1px;height:17px;background:#a0a0a0;"></div>
<div style="left:276px;top:651px;width:1px;height:17px;background:#a0a0a0;"></div>
<div style="left:414px;top:651px;width:1px;height:17px;background:#a0a0a0;"></div>
<div style="left:490px;top:651px;width:1px;height:17px;background:#a0a0a0;"></div>
<div style="left:585px;top:651px;width:1px;height:17px;background:#a0a0a0;"></div>
<div style="left:680px;top:651px;width:1px;height:17px;background:#a0a0a0;"></div>
<div style="left:775px;top:651px;width:1px;height:17px;background:#a0a0a0;"></div>
<div style="left:870px;top:651px;width:1px;height:17px;background:#a0a0a0;"></div>
<div style="left:965px;top:651px;width:1px;height:17px;background:#a0a0a0;"></div>
<div style="left:1060px;top:651px;width:1px;height:17px;background:#a0a0a0;"></div>
<div style="left:1154px;top:651px;width:1px;height:17px;background:#a0a0a0;"></div>
<div style="left:1248px;top:651px;width:1px;height:17px;background:#a0a0a0;"></div>
<div style="left:1342px;top:651px;width:1px;height:17px;background:#a0a0a0;"></div>
<div class="t" style="right:309.16px;transform-origin:100% 0;top:653.34px;font:normal 12px/12px 'Liberation Sans', sans-serif;color:#000;transform:scaleX(0.9100);">460850</div>
<div style="left:1437px;top:357px;width:17px;height:312px;background:#f0f0f0;"></div>
<div style="left:1438px;top:505px;width:15px;height:147px;background:#cdcdcd;"></div>
<svg style="left:1441.5px;top:364px" width="8" height="5" viewBox="0 0 8 5"><path d="M0.7 4.3L4 1L7.3 4.3" stroke="#505050" stroke-width="2" fill="none"/></svg>
<svg style="left:1441.5px;top:658px" width="8" height="5" viewBox="0 0 8 5"><path d="M0.7 0.7L4 4L7.3 0.7" stroke="#505050" stroke-width="2" fill="none"/></svg>
<div style="left:1px;top:673px;width:1457px;height:21px;background:#f0f0f0;"></div>
<div style="left:0px;top:692px;width:1460px;height:2px;background:#5a5a5a;"></div>
<div style="left:170px;top:676px;width:1px;height:17px;background:#d5d5d5;"></div>
<div style="left:370px;top:676px;width:1px;height:17px;background:#d5d5d5;"></div>
<div style="left:620px;top:676px;width:1px;height:17px;background:#d5d5d5;"></div>
<div class="t" style="left:24.76px;transform-origin:0 0;top:679.14px;font:normal 12px/12px 'Liberation Sans', sans-serif;color:#000;transform:scaleX(1.0361);">COM-порт открыт</div>
<div class="t" style="left:174.43px;transform-origin:0 0;top:679.14px;font:normal 12px/12px 'Liberation Sans', sans-serif;color:#000;transform:scaleX(0.9743);">№ взвешивания: 32</div>
<div class="t" style="left:374.01px;transform-origin:0 0;top:679.14px;font:normal 12px/12px 'Liberation Sans', sans-serif;color:#000;transform:scaleX(0.9868);">Считали 11 байт</div>
<div style="left:1455px;top:683px;width:2px;height:2px;background:#b8b8b8;"></div>
<div style="left:1452px;top:686px;width:2px;height:2px;background:#b8b8b8;"></div>
<div style="left:1455px;top:686px;width:2px;height:2px;background:#b8b8b8;"></div>
<div style="left:1449px;top:689px;width:2px;height:2px;background:#b8b8b8;"></div>
<div style="left:1452px;top:689px;width:2px;height:2px;background:#b8b8b8;"></div>
<div style="left:1455px;top:689px;width:2px;height:2px;background:#b8b8b8;"></div>
<div style="left:20px;top:676px;width:1px;height:17px;background:#e3e3e3;"></div>
<div style="left:13px;top:671px;width:117px;height:14px;border:5px solid #7f00ff;background:transparent;"></div>
<div class="t" style="left:13.40px;transform-origin:0 0;top:653.14px;font:bold 12px/12px 'Liberation Sans', sans-serif;color:#7f00ff;transform:scaleX(1.0500);">Состояние Com-порта</div>
</body></html>
